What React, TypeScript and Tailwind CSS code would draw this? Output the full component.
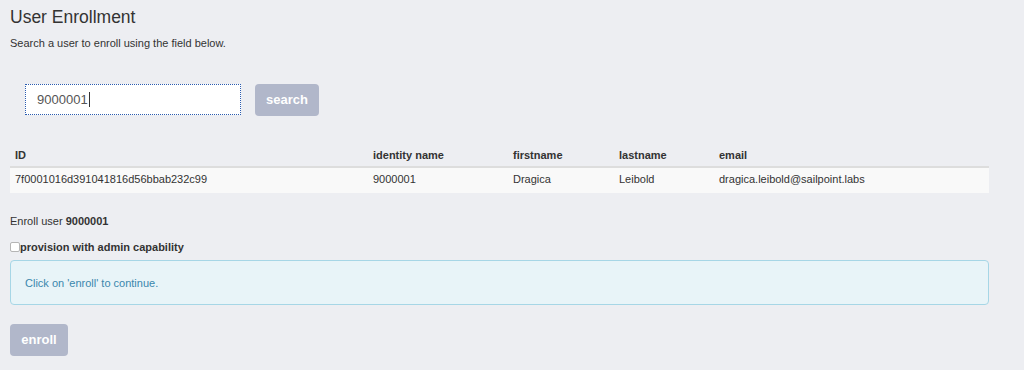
import React from "react";

export default function App() {
  const rows = [
    {
      id: "7f0001016d391041816d56bbab232c99",
      name: "9000001",
      first: "Dragica",
      last: "Leibold",
      email: "dragica.leibold@sailpoint.labs",
    },
  ];
  return (
    <div className="min-h-[370px] w-full bg-[#edeef2] pl-[10px] pr-[35px] pt-[7px] font-['Liberation_Sans',Arial,sans-serif] text-[#333333]">
      <h1 className="text-[17.5px] leading-[20px] font-normal text-[#333333]">User Enrollment</h1>
      <p className="mt-[8px] text-[11px] leading-[16px]">Search a user to enroll using the field below.</p>

      <div className="mt-[33px] flex items-start gap-[14px] pl-[15px]">
        <div className="flex h-[31px] w-[216px] items-center border border-dotted border-[#2b5cb0] bg-white pl-[11px] text-[13px] text-[#555555]">
          <span>9000001</span>
          <span className="ml-[1px] inline-block h-[15px] w-[1px] bg-[#333333]" />
        </div>
        <button className="h-[32px] w-[64px] rounded-[4px] bg-[#b1b7ca] text-[13px] font-bold text-white">
          search
        </button>
      </div>

      <table className="mt-[27px] w-[979px] table-fixed border-collapse text-left text-[11px] leading-[15px]">
        <colgroup>
          <col className="w-[358px]" />
          <col className="w-[140px]" />
          <col className="w-[106px]" />
          <col className="w-[100px]" />
          <col />
        </colgroup>
        <thead>
          <tr className="border-b-2 border-[#dddddd]">
            <th className="px-[5px] pt-[5px] pb-[3px] font-bold">ID</th>
            <th className="px-[5px] pt-[5px] pb-[3px] font-bold">identity name</th>
            <th className="px-[5px] pt-[5px] pb-[3px] font-bold">firstname</th>
            <th className="px-[5px] pt-[5px] pb-[3px] font-bold">lastname</th>
            <th className="px-[5px] pt-[5px] pb-[3px] font-bold">email</th>
          </tr>
        </thead>
        <tbody>
          {rows.map((r) => (
            <tr key={r.id} className="bg-[#f9f9f9]">
              <td className="px-[5px] pt-[4px] pb-[6px]">{r.id}</td>
              <td className="px-[5px] pt-[4px] pb-[6px]">{r.name}</td>
              <td className="px-[5px] pt-[4px] pb-[6px]">{r.first}</td>
              <td className="px-[5px] pt-[4px] pb-[6px]">{r.last}</td>
              <td className="px-[5px] pt-[4px] pb-[6px]">{r.email}</td>
            </tr>
          ))}
        </tbody>
      </table>

      <p className="mt-[20px] text-[11px] leading-[16px]">
        Enroll user <span className="font-bold">9000001</span>
      </p>

      <label className="mt-[10px] flex items-center text-[11px] leading-[16px] font-bold">
        <span className="inline-block h-[10px] w-[10px] rounded-[2px] border border-[#b5b5b5] bg-white" />
        <span>provision with admin capability</span>
      </label>

      <div className="mt-[5px] w-[979px] rounded-[4px] border border-[#a6d6e6] bg-[#e8f4f8] px-[14px] pt-[14px] pb-[13px] text-[11px] leading-[16px] text-[#3a87ad]">
        Click on 'enroll' to continue.
      </div>

      <button className="mt-[19px] h-[32px] w-[58px] rounded-[4px] bg-[#b1b7ca] text-[13px] font-bold text-white">
        enroll
      </button>
    </div>
  );
}
